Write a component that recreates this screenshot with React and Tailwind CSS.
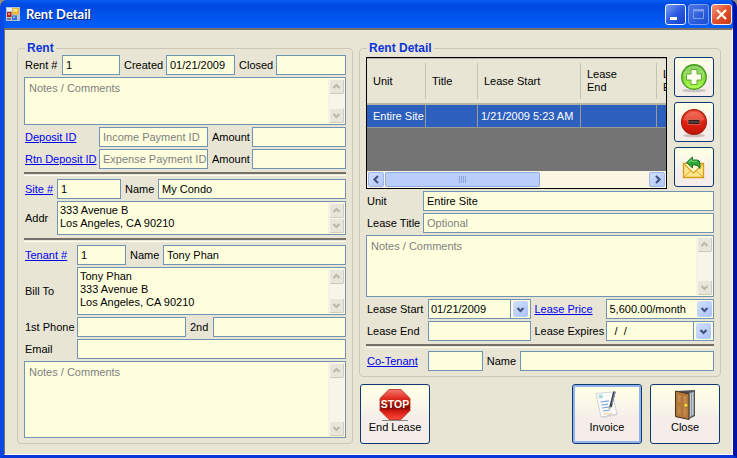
import React from "react";

const field =
  "block h-5 w-full min-w-0 border border-[#7094b4] bg-[#ffffde] pl-[3px] text-[11px] text-black outline-none placeholder:text-[#808080] placeholder:opacity-100";

function Label({ htmlFor, first, children }) {
  return (
    <label htmlFor={htmlFor} className={`whitespace-nowrap ${first ? "pl-px" : "pl-1"}`}>
      {children}
    </label>
  );
}

function LinkLabel({ id, children, first = true }) {
  return (
    <span className={`whitespace-nowrap ${first ? "pl-px" : "pl-1"}`}>
      <a id={id} href="#" className="text-[#0000f0] underline">
        {children}
      </a>
    </span>
  );
}

function Field({ inset, ...props }) {
  return <input type="text" autoComplete="off" className={`${field} ${inset ? "pl-1" : ""}`} {...props} />;
}

function Chevron({ dir, color }) {
  const paths = {
    up: "M1.5 6 L4.5 3 L7.5 6",
    down: "M1.5 3 L4.5 6 L7.5 3",
    left: "M6 1 L2.5 4.5 L6 8",
    right: "M3 1 L6.5 4.5 L3 8",
  };
  return (
    <svg viewBox="0 0 9 9" className="size-[9px]" aria-hidden="true">
      <path d={paths[dir]} fill="none" stroke={color} strokeWidth="2.2" />
    </svg>
  );
}

function MutedScrollButton({ dir }) {
  return (
    <button
      type="button"
      aria-label={`Scroll ${dir}`}
      className="flex h-[15px] w-[15px] shrink-0 items-center justify-center rounded-[2px] border border-t-[#f8f6e8] border-r-[#cfccb9] border-b-[#cfccb9] border-l-[#f8f6e8] bg-[#e9e6d9]"
    >
      <Chevron dir={dir} color="#bcb9a8" />
    </button>
  );
}

function Memo({ height, notes, ...props }) {
  return (
    <div className={`flex w-full min-w-0 border border-[#7094b4] bg-[#ffffde] p-px ${height}`}>
      <textarea
        className={`block min-w-0 flex-1 resize-none overflow-hidden bg-transparent text-[11px] leading-[13px] text-black outline-none placeholder:text-[#808080] placeholder:opacity-100 ${
          notes ? "px-[3px] pt-[3px]" : "px-px pt-px"
        }`}
        {...props}
      />
      <div className="flex w-4 shrink-0 flex-col justify-between border-l border-[#f6f1e2] bg-[#f9f5e6]">
        <MutedScrollButton dir="up" />
        <MutedScrollButton dir="down" />
      </div>
    </div>
  );
}

function Rule() {
  return (
    <div className="py-px">
      <hr className="h-1 border-t-2 border-b border-t-[#75706a] border-b-[#fffff0]" />
    </div>
  );
}

function DropArrow() {
  return (
    <span className="flex h-4 w-[15px] items-center justify-center rounded-[2px] bg-linear-to-br from-[#d3e0fc] to-[#a9c2f8]">
      <Chevron dir="down" color="#43557f" />
    </span>
  );
}

function DateBox(props) {
  return (
    <div className="flex h-5 min-w-0 border border-[#7094b4] bg-[#ffffde]">
      <input
        type="text"
        className="h-full min-w-0 flex-1 bg-transparent px-[2px] text-[11px] whitespace-pre text-black outline-none"
        {...props}
      />
      <button
        type="button"
        aria-label="Open calendar"
        className="flex w-5 shrink-0 items-center justify-center border-l border-[#7094b4]"
      >
        <DropArrow />
      </button>
    </div>
  );
}

function Group({ title, className = "", children }) {
  return (
    <fieldset className={`min-w-0 rounded-[4px] border border-[#cbc8b6] px-[6px] pb-[5px] ${className}`}>
      <legend className="ml-px px-[2px] text-[12px] leading-[14px] font-bold text-[#0b34d8]">{title}</legend>
      {children}
    </fieldset>
  );
}

function XpButton({ className = "", active, children, ...props }) {
  return (
    <button
      type="button"
      className={`flex flex-col items-center rounded-[3px] border border-[#0b3a73] bg-linear-to-b from-[#ffffe6] from-10% to-[#f4edea] to-60% ${
        active ? "ring-2 ring-[#92b4ea] ring-inset" : ""
      } ${className}`}
      {...props}
    >
      {children}
    </button>
  );
}

function AppIcon() {
  return (
    <svg viewBox="0 0 14 14" className="size-[14px]" aria-hidden="true">
      <rect width="14" height="14" fill="#b7c2d6" />
      <rect x="1" y="1" width="5" height="3" fill="#e9edf5" />
      <rect x="6.5" y="1" width="6.5" height="6.5" fill="#f0b62c" />
      <rect x="7.5" y="2" width="3.5" height="3" fill="#fde58a" />
      <rect x="1" y="5" width="4.5" height="5" fill="#b32414" />
      <rect x="2" y="6" width="2" height="2" fill="#ec8d72" />
      <rect x="6" y="8.5" width="5" height="4.5" fill="#3b6fd0" />
      <rect x="7" y="9.5" width="2" height="1.5" fill="#9fc2f5" />
      <rect x="1" y="11" width="4" height="2" fill="#6c7a94" />
    </svg>
  );
}

function AddIcon() {
  return (
    <svg viewBox="0 0 32 32" className="size-8" aria-hidden="true">
      <defs>
        <linearGradient id="addFill" x1="0" y1="0" x2="0" y2="1">
          <stop offset="0" stopColor="#5fbf2e" />
          <stop offset="0.5" stopColor="#86d93a" />
          <stop offset="1" stopColor="#b6ff55" />
        </linearGradient>
      </defs>
      <ellipse cx="16" cy="29.5" rx="12" ry="1.8" fill="#c9c5c0" />
      <circle cx="16" cy="16" r="12.2" fill="url(#addFill)" stroke="#3f9a1f" strokeWidth="1.4" />
      <path d="M5.5 15 A10.5 10.5 0 0 1 26.5 15 Q16 19 5.5 15Z" fill="#ffffff" opacity="0.25" />
      <path
        d="M13 8.5h6v4.500h4.500v6h-4.500v4.500h-6v-4.500h-4.500v-6h4.500z"
        fill="#fffff0"
        stroke="#5fae35"
        strokeWidth="1"
      />
    </svg>
  );
}

function RemoveIcon() {
  return (
    <svg viewBox="0 0 32 32" className="size-8" aria-hidden="true">
      <defs>
        <linearGradient id="removeFill" x1="0" y1="0" x2="0" y2="1">
          <stop offset="0" stopColor="#f0563c" />
          <stop offset="0.5" stopColor="#e0200f" />
          <stop offset="1" stopColor="#c01408" />
        </linearGradient>
      </defs>
      <ellipse cx="16" cy="29.5" rx="11" ry="1.8" fill="#cdbfba" />
      <circle cx="16" cy="16" r="12.4" fill="url(#removeFill)" stroke="#a81a10" strokeWidth="1.2" />
      <path d="M5.5 14 A10.8 10.8 0 0 1 26.5 14 Q16 17 5.5 14Z" fill="#ffffff" opacity="0.18" />
      <rect x="10" y="13.5" width="12" height="5" fill="#3a1a18" stroke="#e86a58" strokeWidth="0.8" />
      <rect x="11" y="15.5" width="10" height="1" fill="#6b6462" />
    </svg>
  );
}

function MailIcon() {
  return (
    <svg viewBox="0 0 32 32" className="size-8" aria-hidden="true">
      <path d="M5.5 12.5h20v14h-20z" fill="#ffe58c" stroke="#dc9a1c" strokeWidth="1.3" />
      <path d="M6 26 L13 19.5 M25 26 L18 19.5" stroke="#e0a52a" strokeWidth="1" />
      <path d="M6 13 L15.5 22 L25 13" fill="#fff8c8" stroke="#dd9f22" strokeWidth="1.1" />
      <path
        d="M8.5 11.5 L14.5 6 V9 H19 Q22 9 22 13 V17.5 Q20 14 17 14 H14.5 V17Z"
        fill="#2fa83a"
        stroke="#146a1c"
        strokeWidth="0.9"
      />
      <path d="M10.5 11.3 L13.7 8.5 V10.3 H19" fill="none" stroke="#7fe07c" strokeWidth="0.9" />
    </svg>
  );
}

function StopIcon() {
  return (
    <svg viewBox="0 0 32 32" className="size-8" aria-hidden="true">
      <defs>
        <linearGradient id="stopFill" x1="0" y1="0" x2="0" y2="1">
          <stop offset="0" stopColor="#f4786c" />
          <stop offset="0.3" stopColor="#e02c20" />
          <stop offset="0.6" stopColor="#7d0806" />
          <stop offset="0.72" stopColor="#d01a12" />
          <stop offset="1" stopColor="#ff4a3a" />
        </linearGradient>
      </defs>
      <path d="M3 31.5h26" stroke="#8b8580" strokeWidth="1" />
      <path
        d="M10 0.5h12l9 9v12l-9 9h-12l-9-9v-12z"
        fill="url(#stopFill)"
        stroke="#b8221a"
        strokeWidth="0.8"
      />
      <text
        x="16"
        y="19"
        textAnchor="middle"
        fontFamily="Liberation Sans, sans-serif"
        fontWeight="700"
        fontSize="10.5"
        fill="#fffdf0"
      >
        STOP
      </text>
    </svg>
  );
}

function InvoiceIcon() {
  return (
    <svg viewBox="0 0 32 32" className="size-8" aria-hidden="true">
      <path d="M10 27 L26 23 L27 26 L12 29Z" fill="#d9d6d4" />
      <path d="M5 4.5 L21 3 L26 25 L10 28Z" fill="#fbfbf8" stroke="#c4cbd6" strokeWidth="0.8" />
      <path d="M7.5 6 L11 5.5 L12 9 L8.5 9.5Z" fill="#a5dcd2" />
      <path
        d="M9.5 13 L18 11.8 M10.3 16 L17 15.1 M11 19 L20 17.7 M12 22 L19 21"
        stroke="#7ba3de"
        strokeWidth="1.2"
      />
      <path d="M13 25.5 q3 -2.5 4 -0.5 t4 -1" fill="none" stroke="#e7b36a" strokeWidth="0.8" />
      <path d="M23.5 2.5 L19.5 18" stroke="#3b4257" strokeWidth="2.6" />
      <path d="M24 3 L21 15" stroke="#9aa3b8" strokeWidth="0.9" />
      <path d="M20.6 18 L18.2 17.4 L17.5 21Z" fill="#b5a48c" />
    </svg>
  );
}

function DoorIcon() {
  return (
    <svg viewBox="0 0 32 32" className="size-8" aria-hidden="true">
      <path d="M7 2 L26 1 V27 L20 30 L7 28Z" fill="#4d4f55" />
      <path d="M20 4 L25 2.5 V26 L20 29Z" fill="#c5ccd2" stroke="#555a60" strokeWidth="0.7" />
      <path d="M22.5 3.5 V27" stroke="#8e969e" strokeWidth="1" />
      <path d="M6.5 2 L20 5 V30.5 L6.5 27.5Z" fill="#b67a3c" stroke="#4a3018" strokeWidth="1" />
      <path d="M8.5 5 L12.2 5.8 V14 L8.5 13.5Z M14 6.2 L18 7 V15 L14 14.3Z" fill="#c68c4d" stroke="#a06a32" strokeWidth="0.5" />
      <path d="M8.5 16.5 L12.2 17 V26.3 L8.5 25.5Z M14 17.3 L18 18 V27.6 L14 26.7Z" fill="#c28848" stroke="#a06a32" strokeWidth="0.5" />
      <circle cx="16.8" cy="16.2" r="1.9" fill="#ffe14a" stroke="#99701a" strokeWidth="0.6" />
    </svg>
  );
}

function CaptionButtons() {
  const base = "flex size-[21px] items-center justify-center rounded-[3px] border";
  return (
    <div className="flex gap-[2px]">
      <button
        type="button"
        aria-label="Minimize"
        className={`${base} border-[#f0f4ff] bg-linear-to-br from-[#7d9cf0] via-[#2c5ae0] to-[#1440c8]`}
      >
        <svg viewBox="0 0 19 19" className="size-[19px]" aria-hidden="true">
          <rect x="4" y="12" width="7" height="3" fill="#fffff0" />
        </svg>
      </button>
      <button
        type="button"
        aria-label="Maximize"
        className={`${base} border-[#7f9ded] bg-linear-to-br from-[#4a76e4] to-[#1a4ad4]`}
      >
        <svg viewBox="0 0 19 19" className="size-[19px]" aria-hidden="true">
          <rect x="4.5" y="4.5" width="10" height="9" fill="none" stroke="#7d9dec" />
          <rect x="4" y="4" width="11" height="2.5" fill="#7d9dec" />
        </svg>
      </button>
      <button
        type="button"
        aria-label="Close window"
        className={`${base} border-[#ffeee4] bg-linear-to-br from-[#f29478] via-[#e24f2c] to-[#c93a14]`}
      >
        <svg viewBox="0 0 19 19" className="size-[19px]" aria-hidden="true">
          <path d="M5 5 L14 14 M14 5 L5 14" stroke="#fffff0" strokeWidth="2.2" />
        </svg>
      </button>
    </div>
  );
}

function LeaseGrid() {
  const cell = "border-r border-b border-[#9a9a92]";
  return (
    <div className="flex min-w-0 flex-1 flex-col overflow-hidden border border-black bg-[#747474]">
      <div className="flex-1 overflow-hidden">
        <table className="w-[360px] table-fixed border-separate border-spacing-0 leading-[13px]">
          <colgroup>
            <col className="w-[59px]" />
            <col className="w-[52px]" />
            <col className="w-[103px]" />
            <col className="w-[76px]" />
            <col />
          </colgroup>
          <thead>
            <tr className="h-[46px] bg-[#e8e5d4]">
              {["Unit", "Title", "Lease Start", "Lease End", "Lease Expires"].map((name, i) => (
                <th
                  key={name}
                  scope="col"
                  className="border-t border-b-2 border-t-[#b5b2a2] border-b-[#b8b4a2] px-0 py-1 font-normal"
                >
                  <div className="flex h-[36px] items-center border-r border-[#c5c2ae] pl-[6px] text-left">
                    <span className={i > 2 ? "w-8" : ""}>{name}</span>
                  </div>
                </th>
              ))}
            </tr>
          </thead>
          <tbody>
            <tr className="h-[23px] bg-[#2c5fbe] whitespace-nowrap text-white">
              <td className={`${cell} pl-[6px]`}>Entire Site</td>
              <td className={cell}></td>
              <td className={`${cell} pl-[3px]`}>1/21/2009 5:23 AM</td>
              <td className={cell}></td>
              <td className={cell}></td>
            </tr>
          </tbody>
        </table>
      </div>
      <div className="flex h-[17px] shrink-0 bg-[#fbf6e4] p-px">
        <button
          type="button"
          aria-label="Scroll left"
          className="flex w-4 shrink-0 items-center justify-center rounded-[2px] border border-[#9db5ea] bg-linear-to-br from-[#d3e0fc] to-[#b0c7f8]"
        >
          <Chevron dir="left" color="#43557f" />
        </button>
        <div className="min-w-0 flex-1 px-px">
          <div className="flex h-full w-[59%] items-center justify-center gap-px rounded-[2px] border border-[#8fabe6] bg-[#bacefa]">
            {[0, 1, 2, 3].map((n) => (
              <span key={n} className="h-[7px] w-px bg-[#8ba6e3]" />
            ))}
          </div>
        </div>
        <button
          type="button"
          aria-label="Scroll right"
          className="flex w-4 shrink-0 items-center justify-center rounded-[2px] border border-[#9db5ea] bg-linear-to-br from-[#d3e0fc] to-[#b0c7f8]"
        >
          <Chevron dir="right" color="#43557f" />
        </button>
      </div>
    </div>
  );
}

function RentGroup() {
  const row = "grid items-center";
  return (
    <Group title="Rent">
      <div className="flex flex-col gap-[2px]">
        <div className={`${row} grid-cols-[38px_58fr_46px_69fr_41px_70fr]`}>
          <Label first htmlFor="rent-no">Rent #</Label>
          <Field id="rent-no" defaultValue="1" />
          <Label htmlFor="created">Created</Label>
          <Field id="created" defaultValue="01/21/2009" />
          <Label htmlFor="closed">Closed</Label>
          <Field id="closed" />
        </div>
        <Memo notes height="h-12" aria-label="Rent notes" placeholder="Notes / Comments" />
        <div className={`${row} grid-cols-[75px_109fr_44px_94fr]`}>
          <LinkLabel id="deposit">Deposit ID</LinkLabel>
          <Field inset aria-labelledby="deposit" placeholder="Income Payment ID" />
          <Label htmlFor="deposit-amount">Amount</Label>
          <Field id="deposit-amount" />
        </div>
        <div className={`${row} grid-cols-[75px_109fr_44px_94fr]`}>
          <LinkLabel id="rtn-deposit">Rtn Deposit ID</LinkLabel>
          <Field inset aria-labelledby="rtn-deposit" placeholder="Expense Payment ID" />
          <Label htmlFor="rtn-amount">Amount</Label>
          <Field id="rtn-amount" />
        </div>
        <Rule />
        <div className={`${row} grid-cols-[33px_64fr_37px_188fr]`}>
          <LinkLabel id="site">Site #</LinkLabel>
          <Field aria-labelledby="site" defaultValue="1" />
          <Label htmlFor="site-name">Name</Label>
          <Field id="site-name" defaultValue="My Condo" />
        </div>
        <div className={`${row} grid-cols-[33px_1fr]`}>
          <Label first htmlFor="addr">Addr</Label>
          <Memo id="addr" height="h-[34px]" defaultValue={"333 Avenue B\nLos Angeles, CA 90210"} />
        </div>
        <Rule />
        <div className={`${row} grid-cols-[53px_49fr_37px_183fr]`}>
          <LinkLabel id="tenant">Tenant #</LinkLabel>
          <Field aria-labelledby="tenant" defaultValue="1" />
          <Label htmlFor="tenant-name">Name</Label>
          <Field id="tenant-name" defaultValue="Tony Phan" />
        </div>
        <div className={`${row} grid-cols-[53px_1fr]`}>
          <Label first htmlFor="bill-to">Bill To</Label>
          <Memo id="bill-to" height="h-12" defaultValue={"Tony Phan\n333 Avenue B\nLos Angeles, CA 90210"} />
        </div>
        <div className={`${row} grid-cols-[53px_109fr_27px_133fr]`}>
          <Label first htmlFor="phone-1">1st Phone</Label>
          <Field id="phone-1" />
          <Label htmlFor="phone-2">2nd</Label>
          <Field id="phone-2" />
        </div>
        <div className={`${row} grid-cols-[53px_1fr]`}>
          <Label first htmlFor="email">Email</Label>
          <Field id="email" />
        </div>
        <Memo notes height="h-[77px]" aria-label="Tenant notes" placeholder="Notes / Comments" />
      </div>
    </Group>
  );
}

function DetailGroup() {
  const row = "grid items-center";
  return (
    <Group title="Rent Detail" className="pt-[2px]">
      <div className="flex flex-col gap-[2px]">
        <div className="flex gap-[7px]">
          <LeaseGrid />
          <div className="flex flex-col gap-[5px] pb-[2px]">
            <XpButton aria-label="Add lease" className="size-10 justify-center">
              <AddIcon />
            </XpButton>
            <XpButton aria-label="Remove lease" className="size-10 justify-center">
              <RemoveIcon />
            </XpButton>
            <XpButton aria-label="Mail lease" className="size-10 justify-center">
              <MailIcon />
            </XpButton>
          </div>
        </div>
        <div className={`${row} grid-cols-[57px_1fr]`}>
          <Label first htmlFor="unit">Unit</Label>
          <Field inset id="unit" defaultValue="Entire Site" />
        </div>
        <div className={`${row} grid-cols-[57px_1fr]`}>
          <Label first htmlFor="lease-title">Lease Title</Label>
          <Field id="lease-title" placeholder="Optional" />
        </div>
        <Memo notes height="h-[62px]" aria-label="Lease notes" placeholder="Notes / Comments" />
        <div className={`${row} grid-cols-[62px_103fr_75px_109fr]`}>
          <Label first htmlFor="lease-start">Lease Start</Label>
          <DateBox id="lease-start" defaultValue="01/21/2009" />
          <LinkLabel first={false} id="lease-price">Lease Price</LinkLabel>
          <div className="grid min-w-0 items-center">
            <select
              aria-labelledby="lease-price"
              className={`${field} col-start-1 row-start-1 appearance-none`}
              defaultValue="month"
            >
              <option value="month">5,600.00/month</option>
            </select>
            <span className="pointer-events-none col-start-1 row-start-1 justify-self-end pr-[2px]">
              <DropArrow />
            </span>
          </div>
        </div>
        <div className={`${row} grid-cols-[62px_103fr_75px_109fr]`}>
          <Label first htmlFor="lease-end">Lease End</Label>
          <Field id="lease-end" />
          <Label htmlFor="lease-expires">Lease Expires</Label>
          <DateBox id="lease-expires" defaultValue="  /  /" />
        </div>
        <Rule />
        <div className={`${row} grid-cols-[62px_55fr_37px_195fr]`}>
          <LinkLabel id="co-tenant">Co-Tenant</LinkLabel>
          <Field aria-labelledby="co-tenant" />
          <Label htmlFor="co-name">Name</Label>
          <Field id="co-name" />
        </div>
      </div>
    </Group>
  );
}

export default function App() {
  const big = "h-[60px] w-[70px] pt-1";
  return (
    <div className="bg-[#8f8c80] font-['Liberation_Sans',Arial,sans-serif] text-[11px] leading-[13px] text-black">
      <div className="overflow-hidden rounded-t-[7px] border-r-4 border-b-3 border-l-4 border-r-[#0012a4] border-b-[#0638d8] border-l-[#0a48e4] bg-[#0a48e4]">
        <header className="flex h-7 items-center justify-between bg-linear-to-b from-[#0a5cf0] via-[#0049e0] via-20% to-[#0060fa] pr-px pl-[2px]">
          <div className="flex items-center gap-[6px]">
            <AppIcon />
            <h1 className="font-['Lato',sans-serif] text-[13px] leading-4 font-bold text-white [text-shadow:1px_1px_#0a1f7a]">
              Rent Detail
            </h1>
          </div>
          <CaptionButtons />
        </header>
        <main className="border border-t-2 border-t-[#76716a] border-r-[#fffff4] border-b-[#fffff4] border-l-[#76716a] bg-[#e8e5d4] pt-[11px] pr-[11px] pb-[10px] pl-3">
          <div className="grid grid-cols-[336fr_362fr] gap-[6px]">
            <RentGroup />
            <div className="flex min-w-0 flex-col justify-between">
              <DetailGroup />
              <div className="flex items-center gap-2 px-px">
                <XpButton className={big}>
                  <StopIcon />
                  <span>End Lease</span>
                </XpButton>
                <XpButton active className={`${big} ml-auto`}>
                  <InvoiceIcon />
                  <span>Invoice</span>
                </XpButton>
                <XpButton className={big}>
                  <DoorIcon />
                  <span>Close</span>
                </XpButton>
              </div>
            </div>
          </div>
        </main>
      </div>
    </div>
  );
}
